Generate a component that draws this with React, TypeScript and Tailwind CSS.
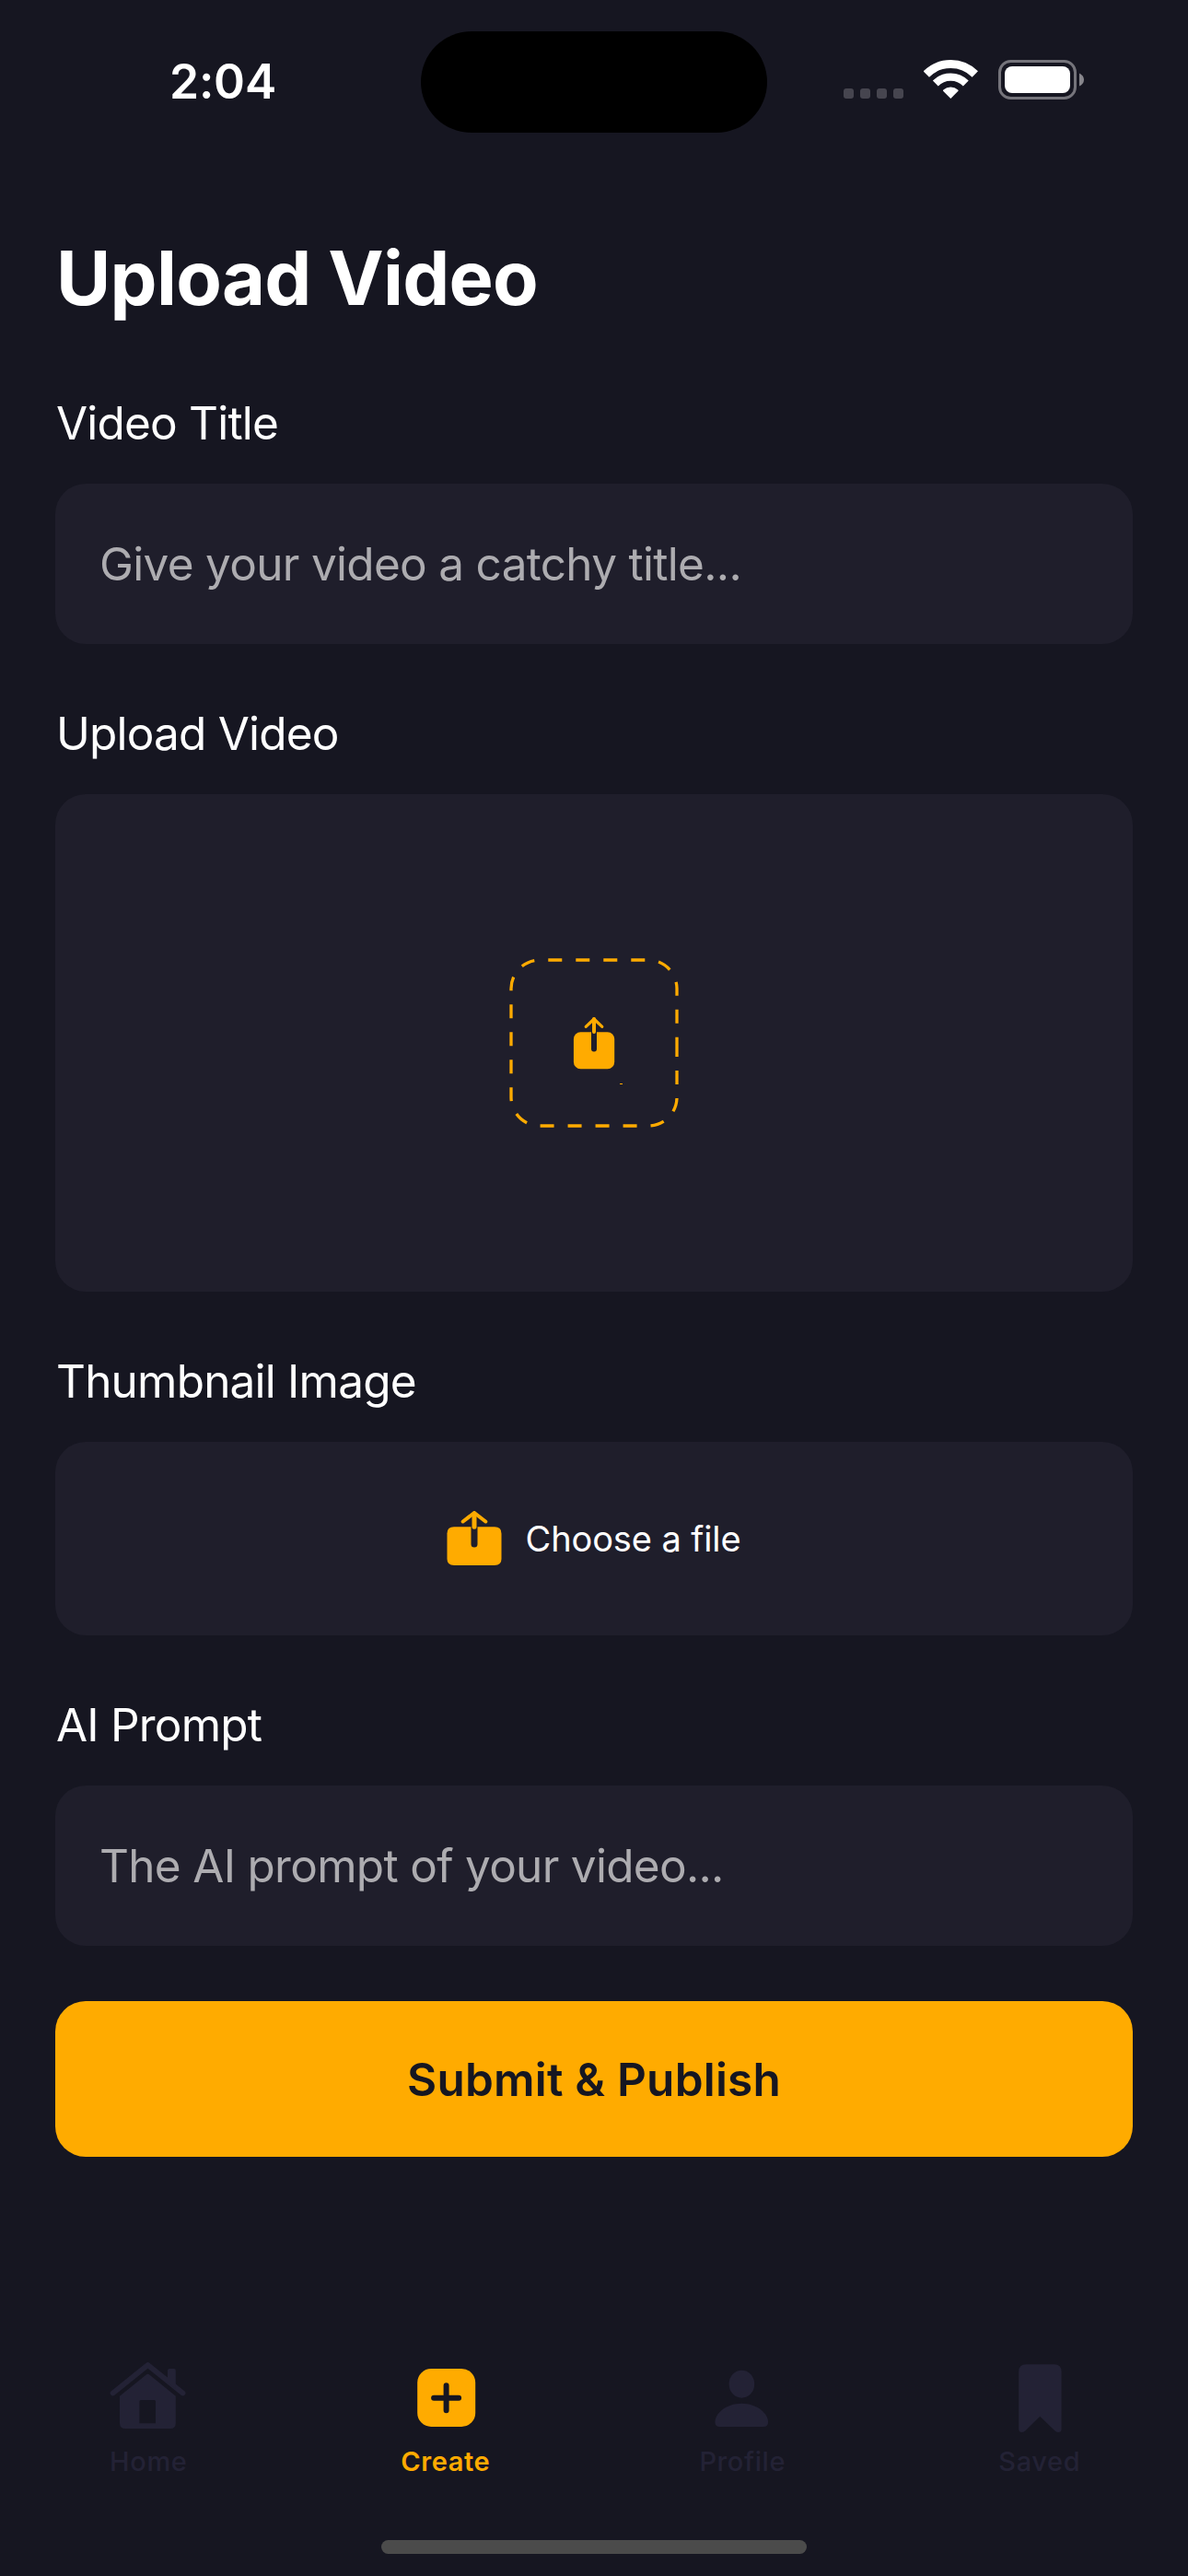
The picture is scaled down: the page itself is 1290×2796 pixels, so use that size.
import React from "react";

function UploadGlyph({ wide }: { wide?: boolean }) {
  if (wide) {
    return (
      <svg className="h-[60px] w-[60px] shrink-0" viewBox="0 0 60 60" fill="none">
        <path d="M8 17.3H52Q59.5 17.3 59.5 24.5V52Q59.5 59 52 59H8Q.5 59 .5 52V24.5Q.5 17.3 8 17.3Z" fill="#FFAB00" />
        <path d="M30 16V36" stroke="#1F1E2B" strokeWidth="7" strokeLinecap="round" />
        <path d="M30 3V17.2" stroke="#FFAB00" strokeWidth="5" strokeLinecap="round" />
        <path d="M17.7 11.5L30 2L42.3 11.5" stroke="#FFAB00" strokeWidth="4" strokeLinecap="round" strokeLinejoin="round" />
      </svg>
    );
  }
  return (
    <svg className="h-[60px] w-[46px]" viewBox="0 0 46 60" fill="none">
      <rect x=".9" y="18.2" width="44.3" height="40" rx="7.5" fill="#FFAB00" />
      <path d="M23 17V36.5" stroke="#1F1E2B" strokeWidth="6" strokeLinecap="round" />
      <path d="M23 4V18" stroke="#FFAB00" strokeWidth="4" strokeLinecap="round" />
      <path d="M14.2 12.4L23 4L31.8 12.4" stroke="#FFAB00" strokeWidth="3.2" strokeLinecap="round" strokeLinejoin="round" />
    </svg>
  );
}

function DashedFrame() {
  return (
    <svg className="absolute inset-0 h-[184px] w-[184px]" viewBox="0 0 184 184" fill="none">
      <path
        d="M182 92V150.9A31.1 31.1 0 0 1 150.9 182H33.1A31.1 31.1 0 0 1 2 150.9V33.1A31.1 31.1 0 0 1 33.1 2H150.9A31.1 31.1 0 0 1 182 33.1Z"
        stroke="#FFAB00"
        strokeWidth="3.3"
        strokeDasharray="15 15"
      />
      <rect x="120" y="136" width="3" height="1" fill="#FFAB00" />
    </svg>
  );
}

function StatusBar() {
  return (
    <header className="flex h-[177px] items-start">
      <div className="flex w-[457px] justify-center pt-[57px] pl-[27px]">
        <span className="text-[51.5px] leading-[62px] font-semibold tracking-[-0.2px] text-white">2:04</span>
      </div>
      <div className="mt-[34px] h-[110px] w-[376px] rounded-full bg-black" />
      <div className="mt-[65px] ml-[83px] flex h-[43px]">
        <div className="mt-[31px] flex gap-[7px]">
          {[0, 1, 2, 3].map((i) => (
            <span key={i} className="h-[11px] w-[11px] rounded-[3px] bg-[#46454F]" />
          ))}
        </div>
        <svg className="ml-[22px] h-[43px] w-[59px]" viewBox="0 0 59 43" fill="none">
          <g stroke="#fff">
            <path d="M2.8 15.5A37.5 37.5 0 0 1 55.8 15.5" strokeWidth="9" />
            <path d="M12.8 25.5A23.3 23.3 0 0 1 45.8 25.5" strokeWidth="8.3" />
          </g>
          <path d="M29.3 42L21.1 33.8Q20.7 33 21.4 32.4A12.5 12.5 0 0 1 37.2 32.4Q37.9 33 37.5 33.8Z" fill="#fff" />
        </svg>
        <svg className="ml-[22px] h-[43px] w-[94px]" viewBox="0 0 94 43" fill="none">
          <rect x="1.5" y="1.5" width="82" height="40" rx="12" stroke="#75747B" strokeWidth="3" />
          <rect x="7" y="7" width="71" height="29" rx="8" fill="#fff" />
          <path d="M88 14.5Q93 17 93 21.5Q93 26 88 28.5Z" fill="#87868C" />
        </svg>
      </div>
    </header>
  );
}

function Label({ children }: { children: React.ReactNode }) {
  return <h2 className="h-[62px] pl-px text-[49.5px] leading-[62px] tracking-[-0.8px] whitespace-nowrap text-white">{children}</h2>;
}

const panel = "rounded-[33px] bg-[#1F1E2B]";

function Tab({ label, active, children }: { label: string; active?: boolean; children: React.ReactNode }) {
  return (
    <button className={`flex flex-1 flex-col items-center ${active ? "text-[#FFAB00]" : "text-[#232235]"}`}>
      <span className="flex h-[84px] w-[84px] items-center justify-center">{children}</span>
      <span className={`mt-[10px] text-[29px] leading-[36px] tracking-[0.6px] ${active ? "font-semibold" : "font-medium"}`}>{label}</span>
    </button>
  );
}

export default function App() {
  return (
    <div className="flex h-[2796px] w-[1290px] flex-col overflow-hidden bg-[#161621] font-['Inter',sans-serif]">
      <StatusBar />
      <main className="flex flex-1 flex-col px-[60px] pt-[75px]">
        <h1 className="pl-px text-[81px] leading-[100px] font-bold tracking-[-0.7px] text-white">Upload Video</h1>

        <section className="mt-[76px]">
          <Label>Video Title</Label>
          <div className={`mt-[35px] flex h-[174px] items-center px-[48px] ${panel}`}>
            <span className="text-[49.5px] tracking-[-0.7px] text-[#ADACB0]">Give your video a catchy title...</span>
          </div>
        </section>

        <section className="mt-[66px]">
          <Label>Upload Video</Label>
          <div className={`mt-[35px] flex h-[540px] items-center justify-center ${panel}`}>
            <div className="relative flex h-[184px] w-[184px] items-center justify-center">
              <DashedFrame />
              <UploadGlyph />
            </div>
          </div>
        </section>

        <section className="mt-[66px]">
          <Label>Thumbnail Image</Label>
          <div className={`mt-[35px] flex h-[210px] items-center justify-center ${panel}`}>
            <UploadGlyph wide />
            <span className="ml-[25px] text-[38px] tracking-[-0.1px] text-white">Choose a file</span>
          </div>
        </section>

        <section className="mt-[66px]">
          <Label>AI Prompt</Label>
          <div className={`mt-[35px] flex h-[174px] items-center px-[48px] ${panel}`}>
            <span className="text-[49.5px] tracking-[-0.7px] text-[#ADACB0]">The AI prompt of your video...</span>
          </div>
        </section>

        <button className="mt-[60px] flex h-[169px] items-center justify-center rounded-[33px] bg-[#FFAB00] pt-px text-[49.5px] font-semibold tracking-[0.2px] text-[#161621]">
          Submit &amp; Publish
        </button>
      </main>

      <nav className="flex h-[197px] shrink-0">
        <Tab label="Home">
          <svg className="h-[84px] w-[84px]" viewBox="0 0 84 84" fill="none">
            <path d="M3.6 37.5L41.5 7L79.5 37.5" stroke="#232235" strokeWidth="5.8" strokeLinecap="round" strokeLinejoin="round" />
            <path d="M65 11H70Q71.8 11 71.8 13V33L63 26V13Q63 11 65 11Z" fill="#232235" />
            <path
              fillRule="evenodd"
              d="M39.5 17.7Q41.5 15.9 43.5 17.7L71.8 40.7V70Q71.8 76 66 76H17Q11 76 11 70V40.7ZM34 45Q32.4 45 32.4 46.5V70.3H50V46.5Q50 45 48.5 45Z"
              fill="#232235"
            />
          </svg>
        </Tab>
        <Tab label="Create" active>
          <svg className="h-[84px] w-[84px]" viewBox="0 0 84 84" fill="none">
            <rect x="11.2" y="11" width="63" height="63" rx="15" fill="#FFAB00" />
            <path d="M29.1 42.7H56.1M42.6 29.2V56.2" stroke="#161621" strokeWidth="6" strokeLinecap="round" />
          </svg>
        </Tab>
        <Tab label="Profile">
          <svg className="h-[84px] w-[84px]" viewBox="0 0 84 84" fill="#232235">
            <ellipse cx="41.4" cy="27.7" rx="13.8" ry="15" />
            <path d="M12.4 69C12.4 60 24 48.7 41.3 48.7S70.1 60 70.1 69Q70.1 74 65 74H17.500Q12.4 74 12.4 69Z" />
          </svg>
        </Tab>
        <Tab label="Saved">
          <svg className="h-[84px] w-[84px]" viewBox="0 0 84 84" fill="#232235">
            <path d="M19.2 14.3Q19.2 6.3 27.2 6.3H57.6Q65.6 6.3 65.6 14.3V76.5Q65.6 80 62 80Q60 80 58.6 78.6L42.3 62.7L26.2 78.6Q24.8 80 22.8 80Q19.2 80 19.2 76.5Z" />
          </svg>
        </Tab>
      </nav>
      <div className="flex h-[39px] shrink-0 justify-center">
        <div className="h-[15px] w-[462px] rounded-full bg-[#4B4B4B]" />
      </div>
    </div>
  );
}
